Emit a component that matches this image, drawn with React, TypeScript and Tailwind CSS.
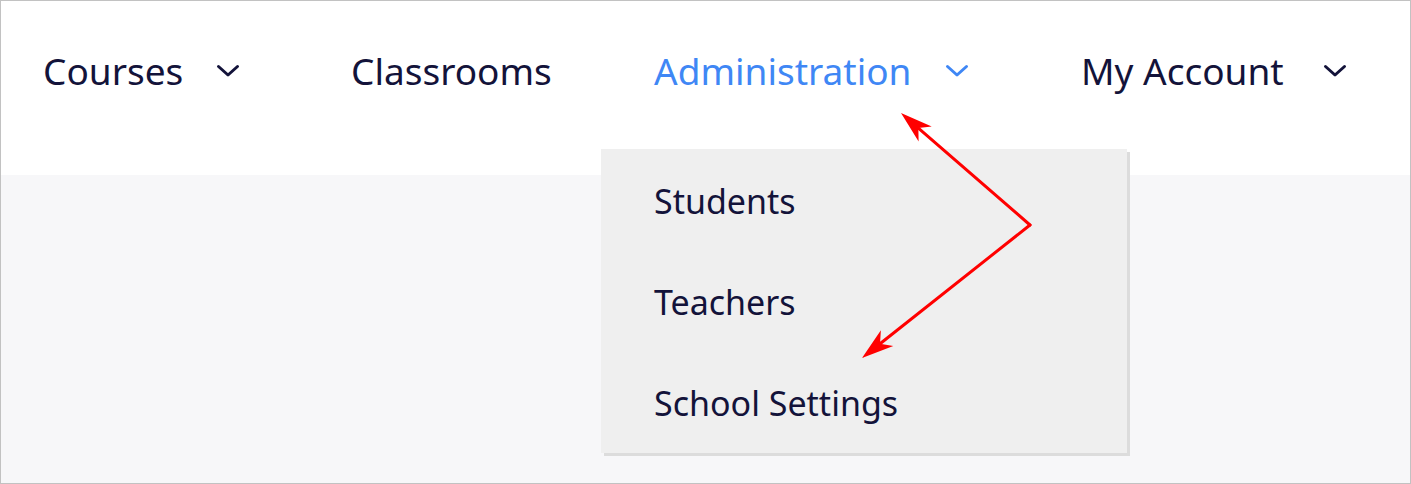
import React from "react";

const font = { fontFamily: '"Noto Sans", "Open Sans", sans-serif' };

function Chevron({ color }: { color: string }) {
  return (
    <svg width="24" height="14" viewBox="0 0 24 14" fill="none">
      <path d="M2.5 2.5 L12 11 L21.5 2.5" stroke={color} strokeWidth="3" strokeLinecap="round" strokeLinejoin="round" />
    </svg>
  );
}

function Arrow({ x1, y1, x2, y2 }: { x1: number; y1: number; x2: number; y2: number }) {
  const dx = x2 - x1;
  const dy = y2 - y1;
  const len = Math.hypot(dx, dy);
  const ux = dx / len;
  const uy = dy / len;
  const px = -uy;
  const py = ux;
  const hl = 32;
  const hw = 10;
  const nl = 23;
  const bx = x2 - ux * hl;
  const by = y2 - uy * hl;
  const nx = x2 - ux * nl;
  const ny = y2 - uy * nl;
  const pts = `${x2},${y2} ${bx + px * hw},${by + py * hw} ${nx},${ny} ${bx - px * hw},${by - py * hw}`;
  return (
    <g>
      <line x1={x1} y1={y1} x2={nx} y2={ny} stroke="#ff0000" strokeWidth="3" strokeLinecap="round" />
      <polygon points={pts} fill="#ff0000" />
    </g>
  );
}

export default function App() {
  const dark = "#13133a";
  const blue = "#3f87f5";
  return (
    <div className="relative w-[1411px] h-[484px] border border-[#c2c2c2] bg-[#f7f7f9] overflow-hidden" style={font}>
      <div className="bg-white h-[174px]">
        <nav className="flex items-center h-[139px] pl-[42px] text-[37px] leading-none">
          <div className="flex items-center w-[308px]">
            <span className="w-[173px]" style={{ color: dark }}>Courses</span>
            <Chevron color={dark} />
          </div>
          <div className="flex items-center w-[303px]">
            <span style={{ color: dark }}>Classrooms</span>
          </div>
          <div className="flex items-center w-[427px]">
            <span className="w-[291px]" style={{ color: blue }}>Administration</span>
            <Chevron color={blue} />
          </div>
          <div className="flex items-center">
            <span className="w-[242px]" style={{ color: dark }}>My Account</span>
            <Chevron color={dark} />
          </div>
        </nav>
      </div>

      <div className="absolute left-[600px] top-[148px] w-[526px] bg-[#efefef] pt-[1px] shadow-[3px_3px_0_0_#dcdcdc]">
        {["Students", "Teachers", "School Settings"].map((t) => (
          <div key={t} className="h-[101px] flex items-center pl-[53px] text-[34px] leading-none" style={{ color: dark }}>
            {t}
          </div>
        ))}
      </div>

      <svg className="absolute left-[-1px] top-[-1px]" width="1411" height="484" viewBox="0 0 1411 484">
        <Arrow x1={1030} y1={225} x2={901} y2={113} />
        <Arrow x1={1030} y1={225} x2={862} y2={358} />
      </svg>
    </div>
  );
}
